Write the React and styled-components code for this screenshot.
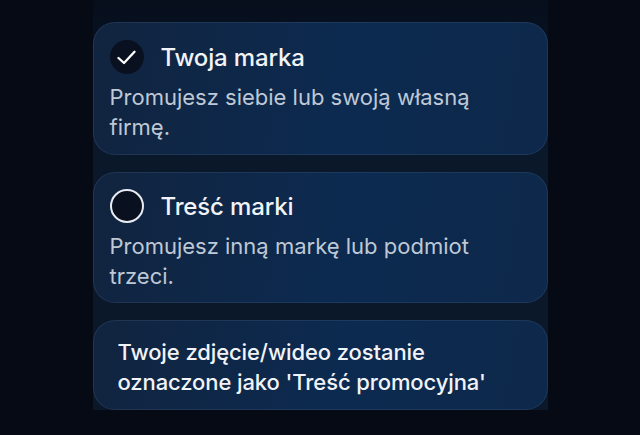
import React from "react";
import styled, { createGlobalStyle } from "styled-components";

const Global = createGlobalStyle`
  html, body { margin: 0; padding: 0; background: #050a14; }
  body { font-family: Inter, "Noto Sans", sans-serif; -webkit-font-smoothing: antialiased; }
`;

const Page = styled.div`
  width: 640px;
  height: 435px;
  background: #050a14;
  display: flex;
  justify-content: center;
  overflow: hidden;
`;

const Column = styled.div`
  width: 455px;
  height: 410px;
  padding-top: 22px;
  box-sizing: border-box;
  background: linear-gradient(180deg, #060e1c 0%, #0a182b 30%, #0a1829 100%);
  display: flex;
  flex-direction: column;
  gap: 17px;
`;

const Card = styled.div`
  box-sizing: border-box;
  border-radius: 22px;
  border: 1px solid rgba(150, 175, 215, 0.12);
  background: linear-gradient(100deg, #11243f 0%, #0c2a50 55%, #0d284a 100%);
  padding: ${(p) => p.$pad};
  height: ${(p) => p.$h}px;
`;

const Row = styled.div`
  display: flex;
  align-items: center;
  gap: 17px;
  height: 34px;
`;

const Radio = styled.div`
  width: 34px;
  height: 34px;
  box-sizing: border-box;
  border-radius: 50%;
  background: #091020;
  border: ${(p) => (p.$checked ? "none" : "2px solid #e8ecf2")};
  display: flex;
  align-items: center;
  justify-content: center;
  flex-shrink: 0;
`;

const Title = styled.div`
  font-size: 24px;
  font-weight: 500;
  color: #f1f3f7;
  letter-spacing: -0.15px;
`;

const Desc = styled.div`
  margin-top: 8px;
  font-size: 22px;
  line-height: 30px;
  color: #bfc8d5;
  width: 400px;
`;

const Note = styled.div`
  font-size: 22px;
  line-height: 30px;
  font-weight: 500;
  color: #f1f3f7;
  letter-spacing: -0.1px;
`;

export default function App() {
  return (
    <Page>
      <Global />
      <Column>
        <Card $pad="17px 16px 0 16px" $h={133}>
          <Row>
            <Radio $checked>
              <svg width="19" height="15" viewBox="0 0 19 15" fill="none">
                <path d="M1.5 8 L7 13 L17.5 1.8" stroke="#ffffff" strokeWidth="2.3" strokeLinecap="round" strokeLinejoin="round" />
              </svg>
            </Radio>
            <Title>Twoja marka</Title>
          </Row>
          <Desc>Promujesz siebie lub swoją własną firmę.</Desc>
        </Card>
        <Card $pad="16px 16px 0 16px" $h={131}>
          <Row>
            <Radio />
            <Title>Treść marki</Title>
          </Row>
          <Desc>Promujesz inną markę lub podmiot trzeci.</Desc>
        </Card>
        <Card $pad="16px 24px 0 24px" $h={90}>
          <Note>
            Twoje zdjęcie/wideo zostanie
            <br />
            oznaczone jako 'Treść promocyjna'
          </Note>
        </Card>
      </Column>
    </Page>
  );
}
